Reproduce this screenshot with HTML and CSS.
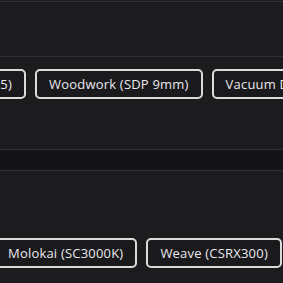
FILE: index.html
```html
<!DOCTYPE html>
<html>
<head>
<meta charset="utf-8">
<link rel="stylesheet" href="styles.css">
</head>
<body>
<div class="page">
  <section class="panel top">
    <div class="spacer"></div>
    <div class="chips-row">
      <div class="track track-a">
        <button class="chip">Plywood (MDF15)</button>
        <button class="chip">Woodwork (SDP 9mm)</button>
        <button class="chip">Vacuum Dust (VD200)</button>
      </div>
    </div>
  </section>
  <div class="band"></div>
  <section class="panel bottom">
    <div class="spacer2"></div>
    <div class="chips-row">
      <div class="track track-b">
        <button class="chip">Molokai (SC3000K)</button>
        <button class="chip">Weave (CSRX300)</button>
        <button class="chip">Linen (LN200)</button>
      </div>
    </div>
  </section>
</div>
</body>
</html>
```

FILE: styles.css
```css
html, body {
  margin: 0;
  padding: 0;
  background: #1c1b1e;
  overflow: hidden;
}
.page {
  width: 283px;
  height: 283px;
  overflow: hidden;
  padding-top: 1px;
  font-family: "Open Sans", "Liberation Sans", sans-serif;
}
.panel {
  background: #1c1b1e;
}
.top {
  border-top: 1px solid #333236;
}
.spacer {
  height: 54px;
  border-bottom: 1px solid #2e2d31;
}
.chips-row {
  overflow: hidden;
  padding-top: 12px;
  height: 80px;
}
.track {
  display: flex;
  gap: 9px;
  white-space: nowrap;
}
.track-a { margin-left: -110px; }
.track-b { margin-left: -6px; }
.chip {
  flex: none;
  height: 30px;
  box-sizing: border-box;
  padding: 0 12px;
  border: 2px solid #dcdbdc;
  border-radius: 5px;
  background: #1a191c;
  color: #ebe9ee;
  font-family: inherit;
  font-size: 13px;
  font-weight: 500;
  letter-spacing: 0.2px;
  line-height: 26px;
}
.band {
  height: 20px;
  background: #141316;
  border-top: 1px solid #2f2e32;
  border-bottom: 1px solid #2f2e32;
}
.spacer2 {
  height: 55px;
}
```
